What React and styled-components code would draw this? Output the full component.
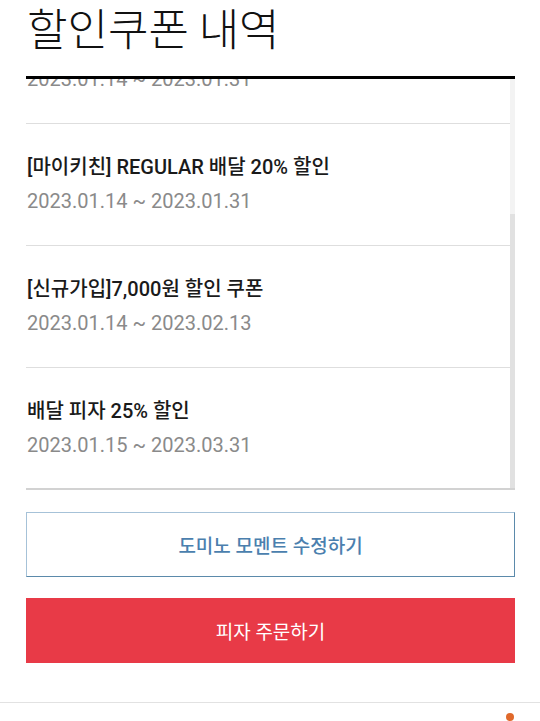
import React from "react";
import styled, { createGlobalStyle } from "styled-components";

const Global = createGlobalStyle`
  html, body { margin: 0; padding: 0; background: #fff; }
  body { font-family: Roboto, "Noto Sans CJK KR", sans-serif; overflow: hidden; }
  * { box-sizing: border-box; }
`;

const Page = styled.div`
  width: 540px;
  height: 721px;
  display: flex;
  flex-direction: column;
  overflow: hidden;
`;

const Content = styled.div`
  padding: 0 25px 0 26px;
  display: flex;
  flex-direction: column;
`;

const Title = styled.h1`
  margin: -3px 0 0 0;
  font-family: "Noto Sans CJK KR Light", "Noto Sans CJK KR DemiLight", "Noto Sans CJK KR", sans-serif;
  font-weight: 300;
  font-size: 44px;
  line-height: 60px;
  color: #111;
  padding-left: 1px;
`;

const ListBox = styled.div`
  margin-top: 19px;
  border-top: 3px solid #000;
  border-bottom: 2px solid #d2d2d2;
  height: 414px;
  display: flex;
`;

const ScrollArea = styled.div`
  flex: 1;
  overflow: hidden;
  display: flex;
  flex-direction: column;
  justify-content: flex-end;
`;

const Track = styled.div`
  width: 5px;
  background: #f3f3f3;
  display: flex;
  flex-direction: column;
  justify-content: flex-end;
`;

const Thumb = styled.div`
  background: #e1e1e1;
  flex: 0 0 67%;
`;

const Item = styled.div`
  flex-shrink: 0;
  padding: 29px 0 30px 1px;
  border-bottom: 1px solid #dedede;
  display: flex;
  flex-direction: column;
  gap: 6px;
  &:last-child { border-bottom: none; padding-bottom: 29px; }
`;

const ItemTitle = styled.div`
  font-size: 20px;
  font-weight: 500;
  line-height: 28px;
  color: #1a1a1a;
`;

const ItemDate = styled.div`
  font-size: 20px;
  line-height: 28px;
  color: #8a8a8a;
`;

const Buttons = styled.div`
  margin-top: 22px;
  display: flex;
  flex-direction: column;
  gap: 21px;
`;

const Button = styled.button`
  height: 65px;
  width: 100%;
  font-family: Roboto, "Noto Sans CJK KR", sans-serif;
  font-size: 19px;
  font-weight: ${(p) => (p.$primary ? 400 : 500)};
  border-radius: 0;
  cursor: pointer;
  background: ${(p) => (p.$primary ? "#e83a47" : "#fff")};
  color: ${(p) => (p.$primary ? "#fff" : "#4b7fae")};
  border: ${(p) => (p.$primary ? "none" : "1px solid")};
  border-color: #a6c2d8 #5b8aab #5b8aab #a6c2d8;
`;

const Footer = styled.div`
  margin-top: 39px;
  border-top: 1px solid #e2e2e2;
  height: 20px;
  display: flex;
  justify-content: flex-end;
  padding: 10px 26px 0 0;
`;

const Dot = styled.span`
  width: 8px;
  height: 8px;
  border-radius: 50%;
  background: #e0692b;
`;

const coupons = [
  { title: "[마이키친] PREMIUM 배달 20% 할인", date: "2023.01.14 ~ 2023.01.31" },
  { title: "[마이키친] PREMIUM 포장 30% 할인", date: "2023.01.14 ~ 2023.01.31" },
  { title: "[마이키친] REGULAR 배달 20% 할인", date: "2023.01.14 ~ 2023.01.31" },
  { title: "[신규가입]7,000원 할인 쿠폰", date: "2023.01.14 ~ 2023.02.13" },
  { title: "배달 피자 25% 할인", date: "2023.01.15 ~ 2023.03.31" },
];

export default function App() {
  return (
    <Page>
      <Global />
      <Content>
        <Title>할인쿠폰 내역</Title>
        <ListBox>
          <ScrollArea>
            {coupons.map((c, i) => (
              <Item key={i}>
                <ItemTitle>{c.title}</ItemTitle>
                <ItemDate>{c.date}</ItemDate>
              </Item>
            ))}
          </ScrollArea>
          <Track>
            <Thumb />
          </Track>
        </ListBox>
        <Buttons>
          <Button>도미노 모멘트 수정하기</Button>
          <Button $primary>피자 주문하기</Button>
        </Buttons>
      </Content>
      <Footer>
        <Dot />
      </Footer>
    </Page>
  );
}
